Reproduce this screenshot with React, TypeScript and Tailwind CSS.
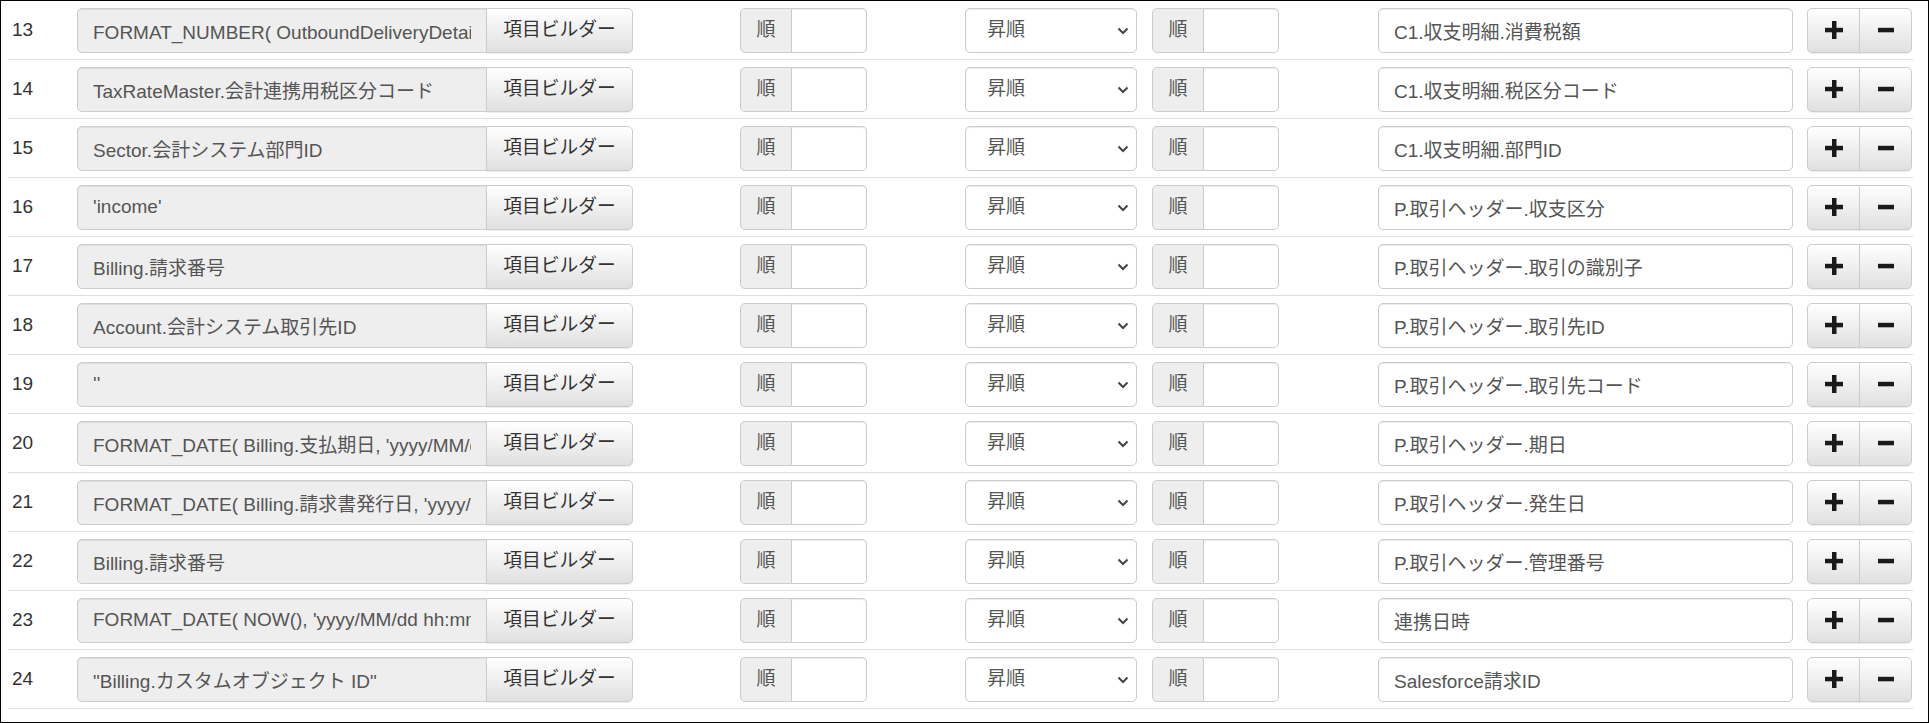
import React from 'react';

const rows = [
  { no: 13, expr: "FORMAT_NUMBER( OutboundDeliveryDetail.消費税額, '0')", target: 'C1.収支明細.消費税額' },
  { no: 14, expr: 'TaxRateMaster.会計連携用税区分コード', target: 'C1.収支明細.税区分コード' },
  { no: 15, expr: 'Sector.会計システム部門ID', target: 'C1.収支明細.部門ID' },
  { no: 16, expr: "'income'", target: 'P.取引ヘッダー.収支区分' },
  { no: 17, expr: 'Billing.請求番号', target: 'P.取引ヘッダー.取引の識別子' },
  { no: 18, expr: 'Account.会計システム取引先ID', target: 'P.取引ヘッダー.取引先ID' },
  { no: 19, expr: "''", target: 'P.取引ヘッダー.取引先コード' },
  { no: 20, expr: "FORMAT_DATE( Billing.支払期日, 'yyyy/MM/dd')", target: 'P.取引ヘッダー.期日' },
  { no: 21, expr: "FORMAT_DATE( Billing.請求書発行日, 'yyyy/MM/dd')", target: 'P.取引ヘッダー.発生日' },
  { no: 22, expr: 'Billing.請求番号', target: 'P.取引ヘッダー.管理番号' },
  { no: 23, expr: "FORMAT_DATE( NOW(), 'yyyy/MM/dd hh:mm')", target: '連携日時' },
  { no: 24, expr: '"Billing.カスタムオブジェクト ID"', target: 'Salesforce請求ID' },
];

const font = "font-['Liberation_Sans','Noto_Sans_CJK_JP',sans-serif]";
const inputBase =
  'h-[45px] border border-[#ccc] text-[19px] text-[#555] outline-none shadow-[inset_0_1px_1px_rgba(0,0,0,0.075)]';
const btnBase =
  'h-[45px] border border-[#ccc] bg-gradient-to-b from-white to-[#e0e0e0] text-[#333] shadow-[0_1px_1px_rgba(0,0,0,0.075)] flex items-center justify-center';

function OrderGroup() {
  return (
    <div className="flex w-[127px] shrink-0">
      <span className={`${inputBase} w-[52px] shrink-0 rounded-l-[5px] bg-[#eee] flex items-center justify-center shadow-none`}>
        順
      </span>
      <input className={`${inputBase} w-[75px] rounded-r-[5px] border-l-0 bg-white px-3`} defaultValue="" />
    </div>
  );
}

function PlusIcon() {
  return (
    <svg width="18" height="18" viewBox="0 0 18 18">
      <rect x="7" y="0" width="4.5" height="18" fill="#1a1a1a" />
      <rect x="0" y="6.8" width="18" height="4.5" fill="#1a1a1a" />
    </svg>
  );
}

function MinusIcon() {
  return (
    <svg width="16" height="18" viewBox="0 0 16 18">
      <rect x="0" y="6.8" width="16" height="4.5" fill="#1a1a1a" />
    </svg>
  );
}

export default function App() {
  return (
    <div className={`w-[1929px] h-[723px] border border-black bg-white ${font}`}>
      <div className="ml-[7px] w-[1905px]">
        {rows.map((r) => (
          <div key={r.no} className="flex items-center h-[59px] border-b border-[#ddd]">
            {/* row number */}
            <div className="w-[69px] shrink-0 pl-[4px] text-[19px] text-[#333]">{r.no}</div>

            {/* expression + builder */}
            <div className="flex shrink-0">
              <input
                readOnly
                value={r.expr}
                className={`${inputBase} w-[410px] rounded-l-[5px] bg-[#eee] px-[15px]`}
              />
              <button className={`${btnBase} w-[147px] -ml-px rounded-r-[5px] text-[18.75px]`}>項目ビルダー</button>
            </div>

            <div className="ml-[107px]">
              <OrderGroup />
            </div>

            {/* sort select */}
            <div className="ml-[98px] relative w-[172px] shrink-0">
              <select
                className={`${inputBase} w-full appearance-none rounded-[5px] bg-white pl-[21px] pr-8`}
                defaultValue="asc"
              >
                <option value="asc">昇順</option>
                <option value="desc">降順</option>
              </select>
              <svg
                className="pointer-events-none absolute right-[8px] top-[19px]"
                width="12"
                height="8"
                viewBox="0 0 12 8"
              >
                <path d="M1.5 1.5 L6 6 L10.5 1.5" fill="none" stroke="#444" strokeWidth="2" />
              </svg>
            </div>

            <div className="ml-[15px]">
              <OrderGroup />
            </div>

            {/* target field */}
            <input
              readOnly
              value={r.target}
              className={`${inputBase} ml-[99px] w-[415px] shrink-0 rounded-[5px] bg-white px-[15px]`}
            />

            {/* add / remove */}
            <div className="ml-[14px] flex shrink-0">
              <button className={`${btnBase} w-[53px] rounded-l-[5px]`}>
                <PlusIcon />
              </button>
              <button className={`${btnBase} w-[53px] -ml-px rounded-r-[5px]`}>
                <MinusIcon />
              </button>
            </div>
          </div>
        ))}
      </div>
    </div>
  );
}
